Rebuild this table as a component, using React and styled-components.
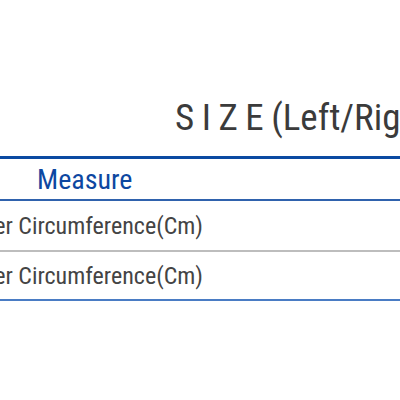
import styled, { createGlobalStyle } from 'styled-components';

const GlobalStyle = createGlobalStyle`
  html, body {
    margin: 0;
    padding: 0;
    background: #ffffff;
    overflow: hidden;
  }
  body {
    font-family: 'Roboto Condensed', 'Liberation Sans Narrow', Roboto, sans-serif;
  }
`;

//styled component
const Page = styled.div`
  width: 400px;
  height: 400px;
  overflow: hidden;
  padding-top: 96px;
  box-sizing: border-box;
`;

const Title = styled.h2`
  margin: 0 0 16px 175px;
  white-space: nowrap;
  color: #3b3b3b;
  font-weight: 400;
  font-size: 37px;
  line-height: 44px;
  word-spacing: -1px;
`;

const Table = styled.div`
  width: 760px;
  margin-left: -64px;
  border-top: 3px solid #0b4aa2;
  border-bottom: 2px solid #4a7cc4;
`;

const Row = styled.div`
  display: grid;
  grid-template-columns: 270px 1fr;
  align-items: center;
  height: ${p => p.$height}px;
  border-bottom: ${p => (p.$last ? 'none' : `2px solid ${p.$line}`)};
`;

const HeadCell = styled.div`
  padding-left: 101px;
  color: #0d47a1;
  font-size: 28px;
`;

const LabelCell = styled.div`
  text-align: right;
  padding-right: 3px;
  white-space: nowrap;
  color: #444444;
  font-size: 24px;
`;

const rows = ['Upper Circumference(Cm)', 'Lower Circumference(Cm)'];

function App() {
  return (
    <>
      <GlobalStyle />
      <Page>
        <Title>S I Z E (Left/Right)</Title>
        <Table>
          <Row $height={40} $line="#2f62ad">
            <HeadCell>Measure</HeadCell>
            <div />
          </Row>
          {rows.map((label, i) => (
            <Row
              key={label}
              $height={i === rows.length - 1 ? 47 : 49}
              $line="#bdbdbd"
              $last={i === rows.length - 1}
            >
              <LabelCell>{label}</LabelCell>
              <div />
            </Row>
          ))}
        </Table>
      </Page>
    </>
  );
}

export default App;
